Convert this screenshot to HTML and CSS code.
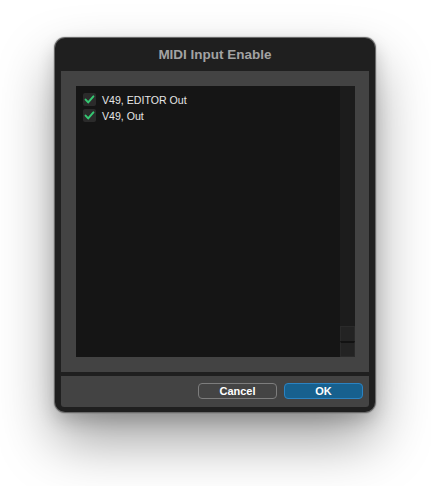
FILE: index.html
```html
<!DOCTYPE html>
<html>
<head>
<meta charset="utf-8">
<link rel="stylesheet" href="styles.css">
</head>
<body>
<div class="window">
  <div class="titlebar">MIDI Input Enable</div>
  <div class="panel">
    <div class="list">
      <div class="items">
        <div class="row">
          <span class="check"><svg width="13" height="13" viewBox="0 0 13 13"><path d="M2.6 6.6 L5.2 9.4 L10.4 3.4" fill="none" stroke="#35c872" stroke-width="2" stroke-linecap="round" stroke-linejoin="round"/></svg></span>
          <span class="label">V49, EDITOR Out</span>
        </div>
        <div class="row">
          <span class="check"><svg width="13" height="13" viewBox="0 0 13 13"><path d="M2.6 6.6 L5.2 9.4 L10.4 3.4" fill="none" stroke="#35c872" stroke-width="2" stroke-linecap="round" stroke-linejoin="round"/></svg></span>
          <span class="label">V49, Out</span>
        </div>
      </div>
      <div class="scrollbar">
        <div class="track"></div>
        <div class="arrow up"></div>
        <div class="arrow down"></div>
      </div>
    </div>
  </div>
  <div class="buttonbar">
    <button class="btn cancel">Cancel</button>
    <button class="btn ok">OK</button>
  </div>
</div>
</body>
</html>
```
FILE: styles.css
```css
html, body {
  margin: 0;
  padding: 0;
  background: #ffffff;
}
body {
  width: 431px;
  height: 486px;
  overflow: hidden;
  padding: 38px 0 0 55px;
  box-sizing: border-box;
  font-family: "Liberation Sans", Arial, Helvetica, sans-serif;
}
.window {
  width: 320px;
  height: 374px;
  box-sizing: border-box;
  background: #1f1f1f;
  border-radius: 10px;
  box-shadow: 0 0 0 1px #6a6a6a, 0 0 0 2px rgba(0,0,0,0.08), 0 28px 56px rgba(0,0,0,0.38), 0 8px 18px rgba(0,0,0,0.18);
  display: flex;
  flex-direction: column;
  padding: 0 6px 5px 6px;
}
.titlebar {
  height: 33px;
  flex: none;
  display: flex;
  align-items: center;
  justify-content: center;
  color: #a3a3a3;
  font-weight: bold;
  font-size: 13.5px;
  padding-bottom: 1px;
  box-sizing: border-box;
}
.panel {
  height: 301px;
  flex: none;
  background: #434343;
  box-sizing: border-box;
  padding: 15px 14px 15px 15px;
}
.list {
  height: 100%;
  background: #151515;
  display: flex;
}
.items {
  flex: 1;
  padding: 7px 0 0 7px;
  display: flex;
  flex-direction: column;
}
.row {
  height: 16px;
  display: flex;
  align-items: flex-start;
}
.check {
  width: 13px;
  height: 13px;
  background: #2b2b2b;
  border-radius: 2px;
  flex: none;
  display: block;
}
.check svg {
  display: block;
}
.label {
  margin-left: 6px;
  color: #e6e6e6;
  font-size: 10.6px;
  line-height: 14px;
}
.scrollbar {
  width: 15px;
  flex: none;
  display: flex;
  flex-direction: column;
  background: #1c1c1c;
}
.track {
  flex: 1;
}
.arrow {
  background: #232323;
  box-sizing: border-box;
  border: 1px solid #2a2a2a;
}
.arrow.up {
  height: 15px;
  border-bottom: none;
}
.arrow.down {
  height: 16px;
  border-top: 2px solid #121212;
}
.buttonbar {
  margin-top: 4px;
  height: 31px;
  flex: none;
  background: #434343;
  border-radius: 0 0 3px 3px;
  display: flex;
  align-items: center;
  justify-content: flex-end;
  gap: 7px;
  padding: 0 6px 1px 0;
  box-sizing: border-box;
}
.btn {
  width: 79px;
  height: 16px;
  margin: 0;
  padding: 0;
  box-sizing: border-box;
  border-radius: 4px;
  font-family: "Liberation Sans", Arial, Helvetica, sans-serif;
  font-weight: bold;
  font-size: 11px;
  color: #ffffff;
  line-height: 14px;
}
.btn.cancel {
  background: #444444;
  border: 1px solid #7d7d7d;
}
.btn.ok {
  background: #17608e;
  border: 1px solid #2b83c2;
}
```
